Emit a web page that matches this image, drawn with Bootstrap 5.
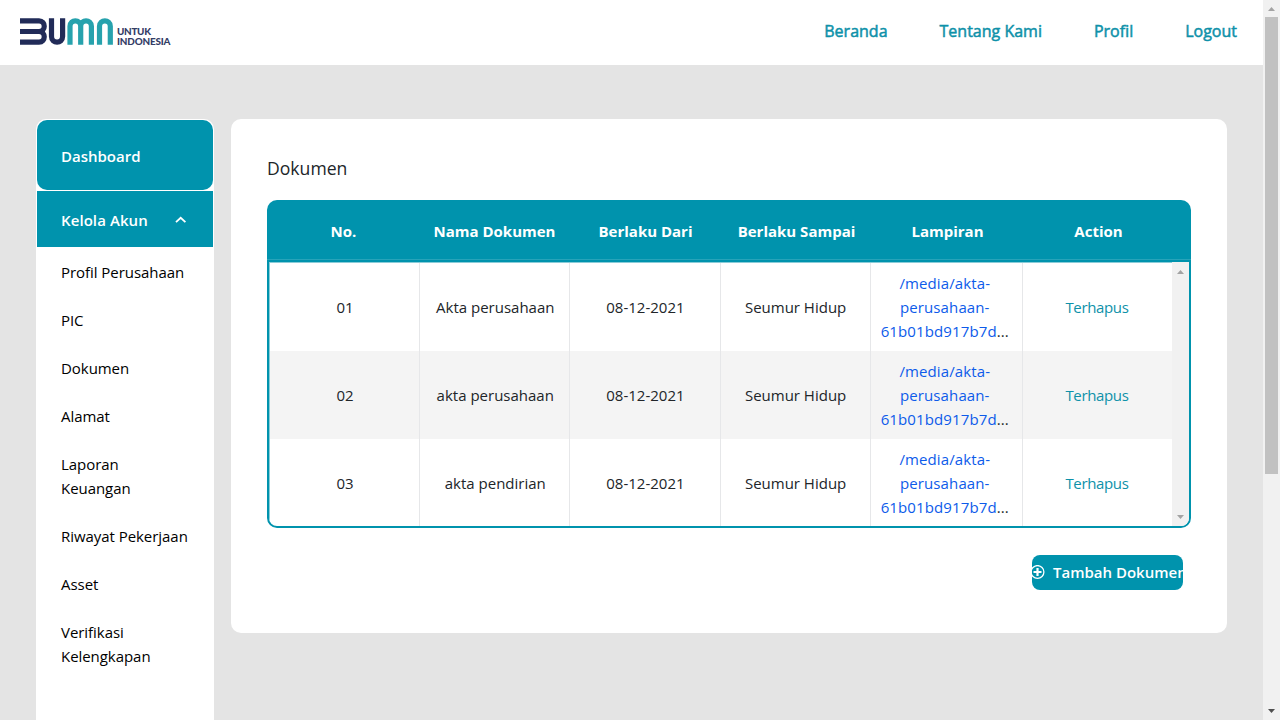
<!DOCTYPE html>
<html lang="id">
<head>
<meta charset="utf-8">
<meta name="viewport" content="width=device-width, initial-scale=1">
<title>Dokumen</title>
<link href="https://cdn.jsdelivr.net/npm/bootstrap@5.3.0/dist/css/bootstrap.min.css" rel="stylesheet">
<style>
:root { --teal: #0093ad; }
body { font-family: "Open Sans", "Noto Sans", sans-serif; font-size: 15px; line-height: 24px; background: #e4e4e4; color: #212529; height: 720px; }
.topbar { height: 65px; background: #fff; padding: 0 26px 3px 20px; }
.topbar .nav-link { color: #0e91a9; font-size: 16px; font-weight: 400; -webkit-text-stroke: .5px #0e91a9; padding: 0; line-height: 24px; }
.top-links { gap: 52px; }
.page-main { padding: 54px 36px 0 36px; gap: 17.5px; }
.sidebar { width: 177.5px; background: #fff; border-radius: 10px 10px 0 0; padding: 1px; }
.side-head { background: var(--teal); color: #fff; font-weight: 600; padding: 0 24px; }
.side-dash { height: 70px; border-radius: 10px; margin-bottom: 1px; padding-top: 1px; }
.side-acc { height: 56px; padding-top: 2px; letter-spacing: .08px; }
.side-acc svg { margin-right: 2px; }
.side-list { padding-top: 1px; letter-spacing: -.05px; }
.side-list a { display: block; color: #000; text-decoration: none; padding: 12px 24px; }
.panel { width: 996px; height: 514px; background: #fff; border-radius: 10px; padding: 36px 36px 0; }
.panel h1 { font-size: 17.6px; line-height: 26px; margin: 0 0 19px; font-weight: 500; }
.t-head { height: 59px; background: var(--teal); color: #fff; font-weight: 700; border-radius: 10px 10px 0 0; padding: 3px 17px 0 1px; }
.t-head > div, .t-row > div { flex: 1 1 0; min-width: 0; text-align: center; }
.t-line { height: 1px; background: #27a3b9; }
.t-body { height: 268px; border: solid var(--teal); border-width: 2px; border-radius: 0 0 10px 10px; overflow: hidden; }
.t-inner { border-top: 1px solid #8accd8; border-left: 1px solid #8accd8; }
.t-row { height: 88px; }
.t-row:nth-child(even) { background: #f4f4f4; }
.t-row > div { display: flex; align-items: center; justify-content: center; border-right: 1px solid #e6e7e9; padding-left: 1px; }
.t-row > div.lamp { letter-spacing: .12px; padding: 0 3px 0 0; }
.t-row > div:last-child { border-right: 0; color: #0e91a9; letter-spacing: -.35px; padding: 0 1px 0 0; }
.lamp a { color: #0d5bea; text-decoration: none; }
.bar { width: 17px; background: #f1f1f1; }
.thumb { height: 457px; width: 13px; background: #c1c1c1; margin: 0 auto; }
.bar svg { display: block; width: 17px; height: 17px; flex: none; }
.btn-add { width: 151px; height: 35px; background: var(--teal); color: #fff; border-radius: 8px; overflow: hidden; font-weight: 600; white-space: nowrap; margin: 27px 8px 0 auto; }
.btn-add svg { flex: none; margin: 0 8px 0 -2px; }
.btn-add span { margin-top: -2px; }
</style>
</head>
<body class="d-flex overflow-hidden">
<div class="flex-grow-1 d-flex flex-column">
  <header class="topbar d-flex align-items-center justify-content-between">
    <svg width="153" height="31" viewBox="0 0 153 31" aria-label="BUMN untuk Indonesia">
      <g fill="none" stroke-width="5.2">
        <path stroke="#212b58" d="M0 4.8H19C26 4.8 26 15.5 19 15.5H0M19 15.5C26 15.5 26 26.2 19 26.2H0"/>
        <path stroke="#212b58" d="M31.5 2.2V20.5C31.5 28 42.6 28 42.6 20.5V2.2"/>
        <path stroke="#27a2ad" d="M50 28.8V10.2C50 3 60.7 3 60.7 10.2V28.8M60.7 10.2C60.7 3 71.4 3 71.4 10.2V28.8M79.5 28.8V10.2C79.5 3 90.3 3 90.3 10.2V28.8"/>
      </g>
      <g fill="#343d66" font-family="Lato, sans-serif" font-weight="900" font-size="9.9">
        <text x="97" y="18.6" textLength="34">UNTUK</text>
        <text x="97" y="28.6" textLength="53.5">INDONESIA</text>
      </g>
    </svg>
    <nav class="nav top-links">
      <a class="nav-link" href="#">Beranda</a>
      <a class="nav-link" href="#">Tentang Kami</a>
      <a class="nav-link" href="#">Profil</a>
      <a class="nav-link" href="#">Logout</a>
    </nav>
  </header>
  <main class="page-main d-flex flex-grow-1">
    <aside class="sidebar">
      <div class="side-head side-dash d-flex align-items-center">Dashboard</div>
      <div class="side-head side-acc d-flex align-items-center"><span>Kelola Akun</span>
        <svg class="ms-auto" width="12" height="8" viewBox="0 0 12 8"><path d="M1 6.2 5.7 1.8l4.7 4.4" fill="none" stroke="#fff" stroke-width="1.8"/></svg>
      </div>
      <nav class="side-list">
        <a href="#">Profil Perusahaan</a>
        <a href="#">PIC</a>
        <a href="#">Dokumen</a>
        <a href="#">Alamat</a>
        <a href="#">Laporan<br>Keuangan</a>
        <a href="#">Riwayat Pekerjaan</a>
        <a href="#">Asset</a>
        <a href="#">Verifikasi<br>Kelengkapan</a>
      </nav>
    </aside>
    <section class="panel">
      <h1>Dokumen</h1>
      <div class="t-head d-flex align-items-center">
        <div>No.</div><div>Nama Dokumen</div><div>Berlaku Dari</div><div>Berlaku Sampai</div><div>Lampiran</div><div>Action</div>
      </div>
      <div class="t-line"></div>
      <div class="t-body d-flex">
        <div class="t-inner flex-grow-1">
          <div class="t-row d-flex"><div>01</div><div>Akta perusahaan</div><div>08-12-2021</div><div>Seumur Hidup</div><div class="lamp"><span><a href="#">/media/akta-<br>perusahaan-<br>61b01bd917b7d</a>...</span></div><div>Terhapus</div></div>
          <div class="t-row d-flex"><div>02</div><div>akta perusahaan</div><div>08-12-2021</div><div>Seumur Hidup</div><div class="lamp"><span><a href="#">/media/akta-<br>perusahaan-<br>61b01bd917b7d</a>...</span></div><div>Terhapus</div></div>
          <div class="t-row d-flex"><div>03</div><div>akta pendirian</div><div>08-12-2021</div><div>Seumur Hidup</div><div class="lamp"><span><a href="#">/media/akta-<br>perusahaan-<br>61b01bd917b7d</a>...</span></div><div>Terhapus</div></div>
        </div>
        <div class="bar d-flex flex-column justify-content-between">
          <svg viewBox="0 0 17 17"><path d="M5 12h7L8.5 8z" fill="#a3a3a3"/></svg>
          <svg viewBox="0 0 17 17"><path d="M5 6h7L8.5 10z" fill="#a3a3a3"/></svg>
        </div>
      </div>
      <button class="btn-add border-0 p-0 d-flex align-items-center">
        <svg width="15" height="15" viewBox="0 0 15 15" fill="none" stroke="#fff"><circle cx="7.5" cy="7" r="6.4" stroke-width="1.3"/><path d="M7.5 3v8M3.5 7h8" stroke-width="2.2"/></svg>
        <span>Tambah Dokumen</span>
      </button>
    </section>
  </main>
</div>
<div class="bar d-flex flex-column">
  <svg viewBox="0 0 17 17"><path d="M5 11h7L8.5 7z" fill="#a3a3a3"/></svg>
  <div class="thumb"></div>
  <svg class="mt-auto" viewBox="0 0 17 17"><path d="M5 6h7L8.5 10z" fill="#505050"/></svg>
</div>
<script src="https://cdn.jsdelivr.net/npm/bootstrap@5.3.0/dist/js/bootstrap.bundle.min.js"></script>
</body>
</html>
